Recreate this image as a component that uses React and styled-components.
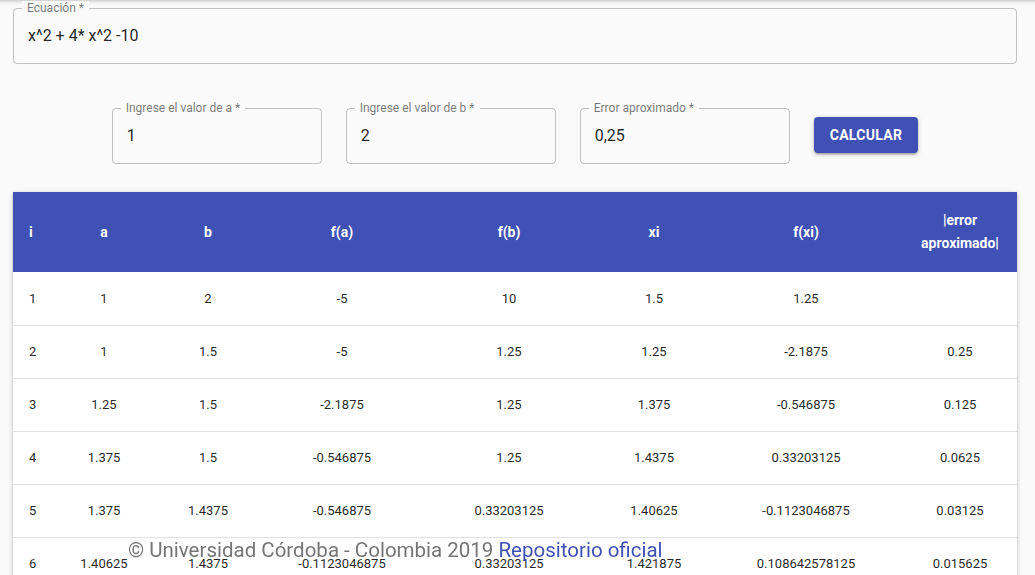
import React from 'react';
import styled, { createGlobalStyle } from 'styled-components';

const GlobalStyle = createGlobalStyle`
  html, body {
    margin: 0;
    padding: 0;
  }
  body {
    background: linear-gradient(#cfcfcf 0, #f2f2f2 3px, #fafafa 6px) no-repeat, #fafafa;
    font-family: Roboto, "Liberation Sans", Arial, sans-serif;
    color: rgba(0, 0, 0, 0.87);
  }
  *, *:before, *:after {
    box-sizing: border-box;
  }
`;

const Page = styled.div`
  padding: 8px 18px 40px 13px;
`;

const Field = styled.div`
  position: relative;
  width: ${p => p.width || '100%'};
  height: 56px;
  border: 1px solid rgba(0, 0, 0, 0.23);
  border-radius: 4px;
  display: flex;
  align-items: center;
  padding: 0 14px;
  font-size: 16px;
  color: rgba(0, 0, 0, 0.87);
`;

const Label = styled.span`
  position: absolute;
  top: -8px;
  left: 8px;
  padding: 0 5px;
  background: #fafafa;
  font-size: 12px;
  line-height: 14px;
  color: rgba(0, 0, 0, 0.54);
`;

const Value = styled.span`
  line-height: 19px;
  margin-bottom: 1px;
`;

const ParamsRow = styled.div`
  display: flex;
  justify-content: center;
  align-items: center;
  gap: 24px;
  margin-top: 44px;
`;

const Button = styled.button`
  height: 36px;
  padding: 0 16px;
  margin-bottom: 2px;
  border: none;
  border-radius: 4px;
  background: #3f51b5;
  color: #fff;
  font-family: inherit;
  font-size: 14px;
  font-weight: 700;
  letter-spacing: 0.3px;
  box-shadow: 0px 1px 5px 0px rgba(0, 0, 0, 0.2), 0px 2px 2px 0px rgba(0, 0, 0, 0.14),
    0px 3px 1px -2px rgba(0, 0, 0, 0.12);
  cursor: pointer;
`;

const Paper = styled.div`
  margin-top: 28px;
  background: #fff;
  box-shadow: 0px 1px 5px 0px rgba(0, 0, 0, 0.2), 0px 2px 2px 0px rgba(0, 0, 0, 0.14),
    0px 3px 1px -2px rgba(0, 0, 0, 0.12);
`;

const Table = styled.table`
  width: 100%;
  border-collapse: collapse;
  table-layout: fixed;
`;

const HeadCell = styled.th`
  height: 80px;
  background: #3f51b5;
  color: #fff;
  font-size: 14px;
  font-weight: 700;
  line-height: 23px;
  text-align: ${p => (p.left ? 'left' : 'center')};
  padding: 0;
  padding-left: ${p => (p.left ? '16px' : '0')};
  vertical-align: middle;
`;

const Cell = styled.td`
  height: 53px;
  font-size: 13px;
  color: rgba(0, 0, 0, 0.87);
  text-align: ${p => (p.left ? 'left' : 'center')};
  padding: 0;
  padding-left: ${p => (p.left ? '16px' : '0')};
  border-bottom: 1px solid #e0e0e0;
`;

const Footer = styled.div`
  position: fixed;
  left: 128px;
  bottom: 13px;
  font-size: 20.5px;
  line-height: 24px;
  color: #757575;
  white-space: nowrap;
`;

const FooterLink = styled.a`
  color: #3f51b5;
  text-decoration: none;
`;

const columns = [
  { key: 'i', label: 'i', width: 44, left: true },
  { key: 'a', label: 'a', width: 94 },
  { key: 'b', label: 'b', width: 114 },
  { key: 'fa', label: 'f(a)', width: 154 },
  { key: 'fb', label: 'f(b)', width: 180 },
  { key: 'xi', label: 'xi', width: 110 },
  { key: 'fxi', label: 'f(xi)', width: 194 },
  { key: 'err', label: '|error aproximado|', width: 114 },
];

const f = x => x * x + 4 * x * x - 10;

function bisection(a0, b0, n) {
  const rows = [];
  let a = a0;
  let b = b0;
  let prev = null;
  for (let i = 1; i <= n; i++) {
    const xi = (a + b) / 2;
    const fxi = f(xi);
    rows.push({
      i,
      a,
      b,
      fa: f(a),
      fb: f(b),
      xi,
      fxi,
      err: prev === null ? '' : Math.abs(xi - prev),
    });
    if (f(a) * fxi < 0) b = xi;
    else a = xi;
    prev = xi;
  }
  return rows;
}

const rows = bisection(1, 2, 8);

export default function App() {
  return (
    <Page>
      <GlobalStyle />
      <Field>
        <Label>Ecuación *</Label>
        <Value>x^2 + 4* x^2 -10</Value>
      </Field>

      <ParamsRow>
        <Field width="210px">
          <Label>Ingrese el valor de a *</Label>
          <Value>1</Value>
        </Field>
        <Field width="210px">
          <Label>Ingrese el valor de b *</Label>
          <Value>2</Value>
        </Field>
        <Field width="210px">
          <Label>Error aproximado *</Label>
          <Value>0,25</Value>
        </Field>
        <Button>CALCULAR</Button>
      </ParamsRow>

      <Paper>
        <Table>
          <colgroup>
            {columns.map(c => (
              <col key={c.key} style={{ width: c.width }} />
            ))}
          </colgroup>
          <thead>
            <tr>
              {columns.map(c => (
                <HeadCell key={c.key} left={c.left}>
                  {c.key === 'err' ? (
                    <>
                      |error
                      <br />
                      aproximado|
                    </>
                  ) : (
                    c.label
                  )}
                </HeadCell>
              ))}
            </tr>
          </thead>
          <tbody>
            {rows.map(r => (
              <tr key={r.i}>
                {columns.map(c => (
                  <Cell key={c.key} left={c.left}>
                    {String(r[c.key])}
                  </Cell>
                ))}
              </tr>
            ))}
          </tbody>
        </Table>
      </Paper>

      <Footer>
        © Universidad Córdoba - Colombia 2019{' '}
        <FooterLink href="#">Repositorio oficial</FooterLink>
      </Footer>
    </Page>
  );
}
